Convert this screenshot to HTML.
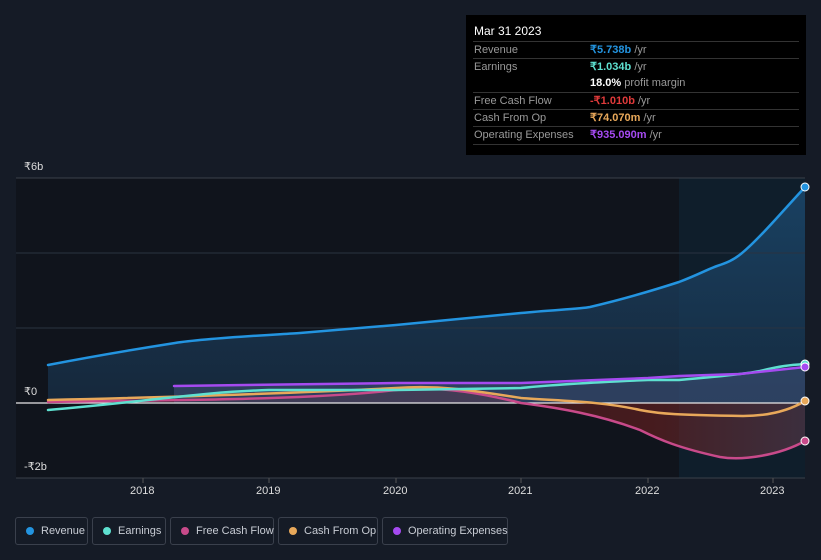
<!DOCTYPE html><html><head><style>
html,body{margin:0;width:821px;height:560px;background:#151b26;font-family:"Liberation Sans",sans-serif;overflow:hidden;position:relative}
.tt{position:absolute;left:466px;top:15px;width:340px;height:140px;background:#000;color:#fff;font-size:11px}
.tt .h{position:absolute;left:8px;top:9px;font-size:12px}
.row{position:absolute;left:7px;width:326px;border-top:1px solid #333;height:17px;line-height:17px}
.row .l{position:absolute;left:1px;color:#999}
.row .v{position:absolute;left:117px;font-weight:bold}
.row .v span{color:#999;font-weight:normal}
.leg{position:absolute;top:517px;height:28px;border:1px solid #3a404c;border-radius:3px;color:#c8ccd4;font-size:11px;line-height:27px;box-sizing:border-box;white-space:nowrap}
.leg i{position:absolute;left:10px;top:9px;width:8px;height:8px;border-radius:50%}
.leg b{font-weight:normal;position:absolute}
.ax{position:absolute;color:#ddd;font-size:11px}
</style></head><body>
<svg width="821" height="560" style="position:absolute;left:0;top:0">
<defs>
<linearGradient id="rg" x1="0" y1="0" x2="0" y2="1"><stop offset="0" stop-color="#1c4a70" stop-opacity=".8"/><stop offset="1" stop-color="#1a3550" stop-opacity=".6"/></linearGradient>
<linearGradient id="fg" x1="0" y1="0" x2="1" y2="0"><stop offset="0" stop-color="#5a1a1a" stop-opacity=".3"/><stop offset=".8" stop-color="#6a2020" stop-opacity=".6"/><stop offset="1" stop-color="#5a3a4a" stop-opacity=".6"/></linearGradient>
</defs>
<rect x="16" y="178" width="789" height="300" fill="#10141c"/>
<rect x="679" y="178" width="126" height="300" fill="#0f1e2b"/>
<path d="M48,365 C100,355 143,348 175,343 S269,335 300,333 L396,325 L521,313 C550,310 580,309 590,307 C620,300 648,292 679,282 C700,274 710,268 720,265 C735,260 743,255 775,220 L805,187 L805,403 L48,403Z" fill="url(#rg)"/>
<path d="M48,402 C143,400 300,401 396,390 C430,386 470,390 521,403 C560,408 600,415 640,430 C660,440 679,448 720,457 C743,461 780,455 805,441 L805,403 L48,403Z" fill="url(#fg)"/>
<path d="M174,386 L396,383 L521,383 L648,378 L679,376 L740,374 L805,367 L805,403 L174,403Z" fill="#4a5a88" fill-opacity=".45"/>
<g stroke="#2a3340" stroke-width="1"><line x1="16" y1="253" x2="805" y2="253"/><line x1="16" y1="328" x2="805" y2="328"/></g>
<line x1="16" y1="178" x2="805" y2="178" stroke="#3a404a"/>
<line x1="16" y1="478" x2="805" y2="478" stroke="#3a404a"/>
<line x1="16" y1="403" x2="805" y2="403" stroke="#e8e8e8" stroke-width="1.2"/>
<g fill="none" stroke-width="2.5" stroke-linecap="round">
<path d="M48,402 C143,400 300,401 396,390 C430,386 470,390 521,403 C560,408 600,415 640,430 C660,440 679,448 720,457 C743,461 780,455 805,441" stroke="#c84a8a"/>
<path d="M48,400 C143,398 300,393 396,388 C440,385 470,390 521,398 C560,401 600,401 640,410 C660,414 679,415 743,416 C770,416 790,410 805,401" stroke="#e8a85a"/>
<path d="M48,410 C143,402 200,392 269,390 L396,390 L521,388 C560,384 600,382 648,380 L679,380 C710,377 740,375 760,371 C780,366 790,365 805,364" stroke="#5ee0d0"/>
<path d="M174,386 L396,383 L521,383 L648,378 L679,376 L740,374 L805,367" stroke="#a54af0"/>
<path d="M48,365 C100,355 143,348 175,343 S269,335 300,333 L396,325 L521,313 C550,310 580,309 590,307 C620,300 648,292 679,282 C700,274 710,268 720,265 C735,260 743,255 775,220 L805,187" stroke="#2394e0"/>
</g>
<g stroke="#fff" stroke-width="1">
<circle cx="805" cy="187" r="4" fill="#2394e0"/><circle cx="805" cy="364" r="4" fill="#5ee0d0"/><circle cx="805" cy="367" r="4" fill="#a54af0"/><circle cx="805" cy="401" r="4" fill="#e8a85a"/><circle cx="805" cy="441" r="4" fill="#c84a8a"/>
</g>
<g stroke="#555" stroke-width="1"><line x1="143" y1="478" x2="143" y2="483"/><line x1="269" y1="478" x2="269" y2="483"/><line x1="396" y1="478" x2="396" y2="483"/><line x1="521" y1="478" x2="521" y2="483"/><line x1="648" y1="478" x2="648" y2="483"/><line x1="773" y1="478" x2="773" y2="483"/></g>
</svg>
<div class="ax" style="left:24px;top:160px">₹6b</div>
<div class="ax" style="left:24px;top:385px">₹0</div>
<div class="ax" style="left:24px;top:460px">-₹2b</div>
<div class="ax" style="left:130px;top:485px">2018</div>
<div class="ax" style="left:256px;top:485px">2019</div>
<div class="ax" style="left:383px;top:485px">2020</div>
<div class="ax" style="left:508px;top:485px">2021</div>
<div class="ax" style="left:635px;top:485px">2022</div>
<div class="ax" style="left:760px;top:485px">2023</div>
<div class="tt">
<div class="h">Mar 31 2023</div>
<div class="row" style="top:26px"><span class="l">Revenue</span><span class="v" style="color:#2394e0">₹5.738b <span>/yr</span></span></div>
<div class="row" style="top:43px"><span class="l">Earnings</span><span class="v" style="color:#5ee0d0">₹1.034b <span>/yr</span></span></div>
<div class="row" style="top:60px;border-top:none"><span class="v" style="color:#fff">18.0% <span>profit margin</span></span></div>
<div class="row" style="top:77px"><span class="l">Free Cash Flow</span><span class="v" style="color:#e03a3a">-₹1.010b <span>/yr</span></span></div>
<div class="row" style="top:94px"><span class="l">Cash From Op</span><span class="v" style="color:#e8a85a">₹74.070m <span>/yr</span></span></div>
<div class="row" style="top:111px"><span class="l">Operating Expenses</span><span class="v" style="color:#a54af0">₹935.090m <span>/yr</span></span></div>
<div class="row" style="top:129px;height:0"></div>
</div>
<div class="leg" style="left:15px;width:73px"><i style="background:#2394e0"></i><b style="left:25px">Revenue</b></div>
<div class="leg" style="left:92px;width:74px"><i style="background:#5ee0d0"></i><b style="left:25px">Earnings</b></div>
<div class="leg" style="left:170px;width:104px"><i style="background:#c84a8a"></i><b style="left:25px">Free Cash Flow</b></div>
<div class="leg" style="left:278px;width:100px"><i style="background:#e8a85a"></i><b style="left:25px">Cash From Op</b></div>
<div class="leg" style="left:382px;width:126px"><i style="background:#a54af0"></i><b style="left:25px">Operating Expenses</b></div>
</body></html>
